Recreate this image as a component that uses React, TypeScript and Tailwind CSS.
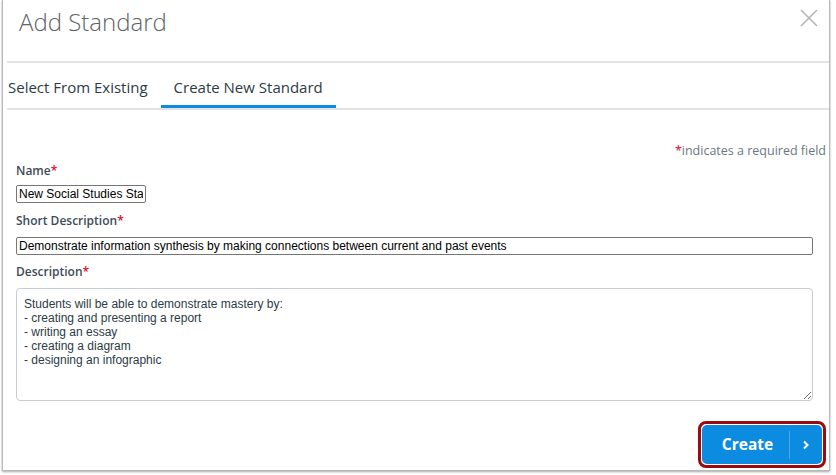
import React from "react";

const font = { fontFamily: '"Open Sans", "Liberation Sans", sans-serif' };
const arial = { fontFamily: '"Liberation Sans", Arial, sans-serif' };

function Label(props: { text: string; className?: string }) {
  return (
    <div
      className={`text-[12px] leading-[20px] font-semibold text-[#3d4b56] ${props.className || ""}`}
    >
      {props.text}
      <span className="text-[#e0061f]">*</span>
    </div>
  );
}

export default function App() {
  const description =
    "Students will be able to demonstrate mastery by:\n- creating and presenting a report\n- writing an essay\n- creating a diagram\n- designing an infographic";

  return (
    <div className="w-[836px] h-[475px] bg-white" style={font}>
      <div className="ml-[2px] w-[828px] h-[471px] bg-white border-l border-r border-b border-[#b8b8b8] shadow-[0_1px_2px_rgba(0,0,0,0.35)] flex flex-col">
        {/* header */}
        <div className="h-[61px] flex justify-between pl-[16px] pr-[10px] pt-[5px]">
          <h1 className="text-[24px] leading-[33px] font-light text-[#5f6468]">
            Add Standard
          </h1>
          <svg width="20" height="20" viewBox="0 0 20 20" className="mt-[3px]">
            <path d="M2 2 L18 18 M18 2 L2 18" stroke="#b4b4b4" strokeWidth="1.6" fill="none" />
          </svg>
        </div>
        <div className="ml-[4px] h-[2px] bg-[#e2e2e2]" />

        {/* tabs */}
        <div className="flex h-[45px] text-[15px] text-[#2d3b45]">
          <div className="pl-[5px] pr-[13px] flex items-center pt-[4px]">Select From Existing</div>
          <div className="px-[13px] flex items-center border-b-[3px] border-[#0b8ce0] pt-[7px]">
            Create New Standard
          </div>
        </div>
        <div className="ml-[4px] h-[2px] bg-[#e2e2e2]" />

        {/* form */}
        <div className="flex flex-col pl-[13px] pr-[3px] pt-[30px]">
          <div className="text-right text-[12.5px] leading-[19px] pt-[1px] text-[#6b7780]">
            <span className="text-[#e0061f]">*</span>indicates a required field
          </div>

          <Label text="Name" className="mt-[1px]" />
          <input
            readOnly
            defaultValue="New Social Studies Standard"
            className="mt-[4px] w-[130px] h-[18px] border border-[#767676] rounded-[2px] px-[2px] text-[12px] text-black outline-none"
            style={arial}
          />

          <Label text="Short Description" className="mt-[8px]" />
          <input
            readOnly
            defaultValue="Demonstrate information synthesis by making connections between current and past events"
            className="mt-[6px] w-[797px] h-[18px] border border-[#767676] rounded-[2px] px-[2px] text-[12px] text-black outline-none"
            style={arial}
          />

          <Label text="Description" className="mt-[7px]" />
          <textarea
            readOnly
            value={description}
            className="mt-[6px] w-[797px] h-[113px] border border-[#c7cdd1] rounded-[4px] px-[7px] pt-[8px] text-[12px] leading-[14px] text-[#2d3b45] outline-none"
            style={arial}
          />

          <div className="flex justify-end mt-[20px]">
            <div className="rounded-[8px] border-[3px] border-[#9b0a0f] p-[1px]">
              <button className="h-[39px] w-[120px] rounded-[5px] bg-[#0b8ce0] flex items-center text-white">
                <span className="w-[87px] pl-[4px] text-center text-[15.5px] font-bold">Create</span>
                <span className="h-[28px] w-px bg-[#4aa9ea]" />
                <span className="flex-1 flex justify-center">
                  <svg width="8" height="10" viewBox="0 0 8 10">
                    <path d="M2 1.5 L5.5 5 L2 8.5" stroke="white" strokeWidth="2" fill="none" />
                  </svg>
                </span>
              </button>
            </div>
          </div>
        </div>
      </div>
    </div>
  );
}
